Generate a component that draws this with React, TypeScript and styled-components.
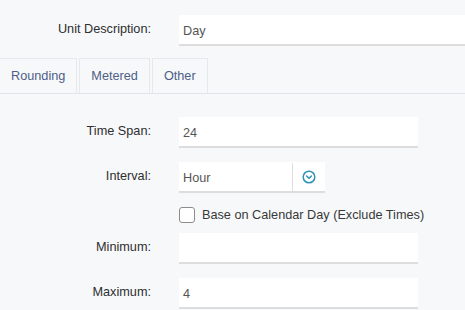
import React, { memo } from 'react';
import styled, { createGlobalStyle } from 'styled-components';

const GlobalStyle = createGlobalStyle`
  html, body {
    margin: 0;
    padding: 0;
    background: #f7f8fa;
    overflow: hidden;
  }
  body {
    font-family: "Liberation Sans", Arial, Helvetica, sans-serif;
    font-size: 12.7px;
    color: #333;
  }
`

const Page = styled.div`
  width: 465px;
  height: 310px;
  padding-top: 15px;
  box-sizing: border-box;
  background: #f7f8fa;
  overflow: hidden;
`

const Row = styled.div<{ $gap?: number }>`
  display: grid;
  grid-template-columns: 151px 1fr;
  column-gap: 28px;
  align-items: center;
  margin-top: ${p => (p.$gap ?? 14)}px;

  &:first-child {
    margin-top: 0;
  }
`

const Label = styled.label`
  text-align: right;
  color: #2e2e2e;
  padding-bottom: 3px;
  white-space: nowrap;
`

const Input = styled.div<{ $width?: number }>`
  box-sizing: border-box;
  height: 31px;
  width: ${p => (p.$width ? `${p.$width}px` : '100%')};
  padding: 2px 4px 0;
  display: flex;
  align-items: center;
  background: #fff;
  border-bottom: 2px solid #dddddd;
  color: #555;
  white-space: nowrap;
`

const TabBar = styled.div`
  display: flex;
  gap: 2px;
  margin-top: 12px;
  margin-left: -1px;
  border-bottom: 1px solid #e1e4e8;
`

const Tab = styled.div`
  height: 35px;
  box-sizing: border-box;
  padding: 0 11px;
  display: flex;
  align-items: center;
  border: 1px solid #e6e8ec;
  border-bottom: none;
  color: #4d6088;
`

const Content = styled.div`
  padding-top: 23px;
`

const Select = styled.div`
  box-sizing: border-box;
  width: 146px;
  height: 31px;
  display: flex;
  background: #fff;
  border-bottom: 2px solid #dddddd;

  .value {
    flex: 1;
    display: flex;
    align-items: center;
    padding: 2px 4px 0;
    color: #555;
  }

  .toggle {
    width: 32px;
    display: flex;
    align-items: center;
    justify-content: center;
    border-left: 1px solid #dedede;
    margin: 1px 0 0;
  }
`

const CheckRow = styled.div`
  display: flex;
  align-items: center;
  gap: 7px;
  height: 16px;
  margin-top: 14px;
  margin-left: 179px;
  color: #383838;
  white-space: nowrap;
`

const Box = styled.span`
  width: 16px;
  height: 16px;
  box-sizing: border-box;
  border: 1px solid #8c8c8c;
  border-radius: 3px;
  background: #fff;
`

const ChevronCircle = () => (
  <svg width="14" height="14" viewBox="0 0 14 14" fill="none">
    <circle cx="7" cy="7" r="5.8" stroke="#2f93b3" strokeWidth="1.5" />
    <path d="M4.6 6 L7 8.3 L9.4 6" stroke="#2f93b3" strokeWidth="1.5" strokeLinecap="round" strokeLinejoin="round" />
  </svg>
)

export default memo(function App() {
  return (
    <Page>
      <GlobalStyle />
      <Row>
        <Label>Unit Description:</Label>
        <Input>Day</Input>
      </Row>

      <TabBar>
        <Tab>Rounding</Tab>
        <Tab>Metered</Tab>
        <Tab>Other</Tab>
      </TabBar>

      <Content>
        <Row>
          <Label>Time Span:</Label>
          <Input $width={239}>24</Input>
        </Row>
        <Row>
          <Label>Interval:</Label>
          <Select>
            <div className="value">Hour</div>
            <div className="toggle"><ChevronCircle /></div>
          </Select>
        </Row>
        <CheckRow>
          <Box />
          <span>Base on Calendar Day (Exclude Times)</span>
        </CheckRow>
        <Row $gap={10}>
          <Label>Minimum:</Label>
          <Input $width={239}></Input>
        </Row>
        <Row>
          <Label>Maximum:</Label>
          <Input $width={239}>4</Input>
        </Row>
      </Content>
    </Page>
  )
})
